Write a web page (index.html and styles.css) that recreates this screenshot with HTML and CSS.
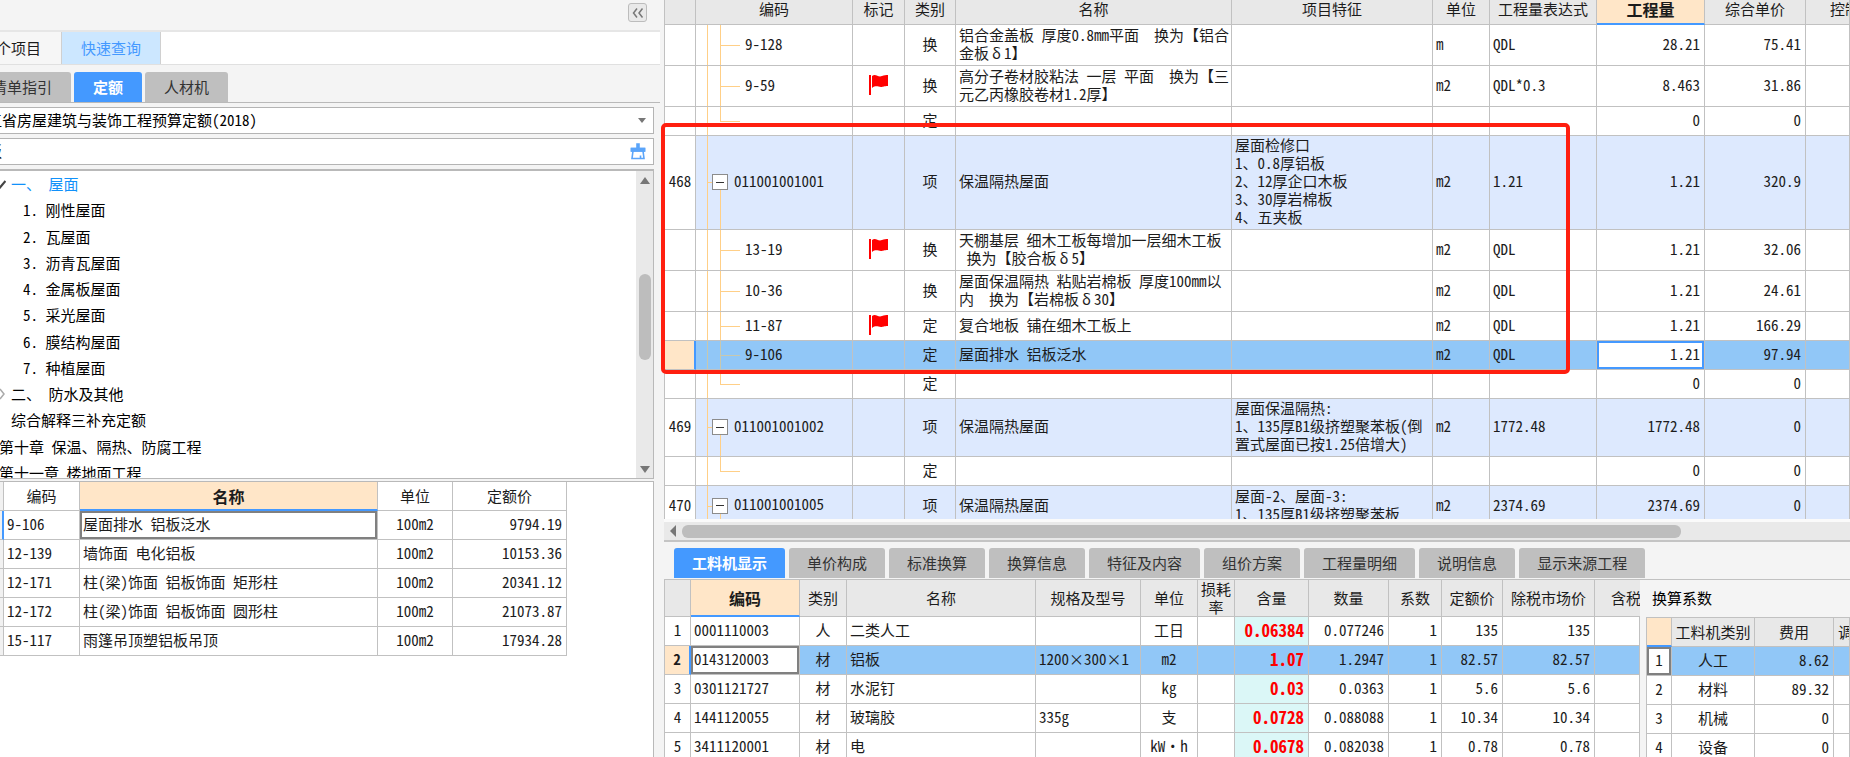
FILE: index.html
```html
<!DOCTYPE html>
<html lang="zh-CN">
<head>
<meta charset="utf-8">
<title>工程计价</title>
<link rel="stylesheet" href="styles.css">
</head>
<body>
<div class="app">
  <aside class="side">
    <header class="side-head">
      <button class="collapse" type="button" aria-label="收起">
        <svg width="12" height="12" viewBox="0 0 12 12" fill="none" stroke="#777" stroke-width="1.5"><path d="M5 1.500 1.500 6 5 10.500M10.500 1.500 7 6l3.500 4.500"/></svg>
      </button>
    </header>
    <nav class="modes">
      <button class="mode mode-first" type="button">个项目</button>
      <button class="mode mode-on" type="button">快速查询</button>
    </nav>
    <nav class="tabs side-tabs">
      <button class="tab" type="button">清单指引</button>
      <button class="tab tab-on" type="button">定额</button>
      <button class="tab" type="button">人材机</button>
    </nav>
    <div class="side-body">
      <div class="field">
        <select class="field-input" aria-label="定额库"><option>江省房屋建筑与装饰工程预算定额(2018)</option></select>
        <svg class="caret" width="8" height="5" viewBox="0 0 8 5"><path d="M0 0h8L4 5z" fill="#777"/></svg>
      </div>
      <div class="field">
        <input class="field-input" type="text" value="板" aria-label="查询">
        <button class="clear" type="button" aria-label="清除">
          <svg width="16" height="17" viewBox="0 0 16 17" fill="none" stroke="#5ba5fa" stroke-width="1.600"><path d="M8 1v4M1.500 8V5.500h13V8zM3 8l-1 7.500h12L13 8M10.500 15.500v-3"/><path d="M7 1h2v4H7zM1.500 5.500h13V8h-13z" fill="#5ba5fa"/></svg>
        </button>
      </div>
      <div class="tree-box">
        <ul class="tree">
          <li class="lv1 open"><svg class="mark" width="9" height="9" viewBox="0 0 9 9"><path d="M0 4.500 3 7.500 8.500 1" fill="none" stroke="#444" stroke-width="2.200"/></svg>一、 屋面</li>
          <li class="lv2">1. 刚性屋面</li>
          <li class="lv2">2. 瓦屋面</li>
          <li class="lv2">3. 沥青瓦屋面</li>
          <li class="lv2">4. 金属板屋面</li>
          <li class="lv2">5. 采光屋面</li>
          <li class="lv2">6. 膜结构屋面</li>
          <li class="lv2">7. 种植屋面</li>
          <li class="lv1"><svg class="mark" width="9" height="12" viewBox="0 0 9 12"><path d="M3 1 7 6 3 11" fill="none" stroke="#aaa" stroke-width="1.500"/></svg>二、 防水及其他</li>
          <li class="lv1">综合解释三补充定额</li>
          <li class="lv0">第十章 保温、隔热、防腐工程</li>
          <li class="lv0">第十一章 楼地面工程</li>
        </ul>
        <div class="vbar">
          <svg width="10" height="7" viewBox="0 0 10 7"><path d="M0 7 5 0l5 7z" fill="#777"/></svg>
          <div class="vtrack"><div class="vthumb"></div></div>
          <svg width="10" height="7" viewBox="0 0 10 7"><path d="M0 0h10L5 7z" fill="#777"/></svg>
        </div>
      </div>
      <div class="result-box">
        <table class="sheet results">
          <colgroup><col class="w-4"><col class="w-76"><col class="w-298"><col class="w-75"><col class="w-114"></colgroup>
          <thead><tr><th></th><th>编码</th><th class="active">名称</th><th>单位</th><th>定额价</th></tr></thead>
          <tbody>
            <tr><td class="row-on"></td><td>9-106</td><td class="picked">屋面排水 铝板泛水</td><td class="c">100m2</td><td class="r">9794.19</td></tr>
            <tr><td></td><td>12-139</td><td>墙饰面 电化铝板</td><td class="c">100m2</td><td class="r">10153.36</td></tr>
            <tr><td></td><td>12-171</td><td>柱(梁)饰面 铝板饰面 矩形柱</td><td class="c">100m2</td><td class="r">20341.12</td></tr>
            <tr><td></td><td>12-172</td><td>柱(梁)饰面 铝板饰面 圆形柱</td><td class="c">100m2</td><td class="r">21073.87</td></tr>
            <tr><td></td><td>15-117</td><td>雨篷吊顶塑铝板吊顶</td><td class="c">100m2</td><td class="r">17934.28</td></tr>
          </tbody>
        </table>
      </div>
    </div>
  </aside>

  <main class="main">
    <section class="bill">
      <div class="bill-view">
        <table class="sheet bill-table">
          <colgroup><col class="w-31"><col class="w-157"><col class="w-52"><col class="w-51"><col class="w-276"><col class="w-201"><col class="w-57"><col class="w-107"><col class="w-108"><col class="w-101"><col></colgroup>
          <thead><tr><th></th><th>编码</th><th>标记</th><th>类别</th><th>名称</th><th>项目特征</th><th>单位</th><th>工程量表达式</th><th class="active">工程量</th><th>综合单价</th><th class="cut">控制</th></tr></thead>
          <tbody>
            <tr class="h2"><td></td><td class="kid">9-128</td><td></td><td class="c">换</td><td>铝合金盖板 厚度0.8mm平面&nbsp;&nbsp;换为【铝合<br>金板<span class="fw">δ</span>1】</td><td></td><td>m</td><td>QDL</td><td class="r">28.21</td><td class="r">75.41</td><td></td></tr>
            <tr class="h2"><td></td><td class="kid">9-59</td><td class="c"><svg class="flag" width="20" height="22" viewBox="0 0 20 22"><path d="M1 1v20" stroke="#f00" stroke-width="2"/><path d="M3 2c4-3 6 2 10 0 2-1 4-1 6-1v11c-4 0-5 1-7 1-3 0-5-2-9 1z" fill="#f00"/></svg></td><td class="c">换</td><td>高分子卷材胶粘法 一层 平面&nbsp;&nbsp;换为【三<br>元乙丙橡胶卷材1.2厚】</td><td></td><td>m2</td><td>QDL*0.3</td><td class="r">8.463</td><td class="r">31.86</td><td></td></tr>
            <tr><td></td><td class="kid last"></td><td></td><td class="c">定</td><td></td><td></td><td></td><td></td><td class="r">0</td><td class="r">0</td><td></td></tr>
            <tr class="item h5"><td class="c no">468</td><td class="parent"><button class="fold" type="button" aria-label="折叠"></button>011001001001</td><td></td><td class="c">项</td><td>保温隔热屋面</td><td>屋面检修口<br>1、0.8厚铝板<br>2、12厚企口木板<br>3、30厚岩棉板<br>4、五夹板</td><td>m2</td><td>1.21</td><td class="r">1.21</td><td class="r">320.9</td><td></td></tr>
            <tr class="h2"><td></td><td class="kid">13-19</td><td class="c"><svg class="flag" width="20" height="22" viewBox="0 0 20 22"><path d="M1 1v20" stroke="#f00" stroke-width="2"/><path d="M3 2c4-3 6 2 10 0 2-1 4-1 6-1v11c-4 0-5 1-7 1-3 0-5-2-9 1z" fill="#f00"/></svg></td><td class="c">换</td><td>天棚基层 细木工板每增加一层细木工板<br>&nbsp;换为【胶合板<span class="fw">δ</span>5】</td><td></td><td>m2</td><td>QDL</td><td class="r">1.21</td><td class="r">32.06</td><td></td></tr>
            <tr class="h2"><td></td><td class="kid">10-36</td><td></td><td class="c">换</td><td>屋面保温隔热 粘贴岩棉板 厚度100mm以<br>内&nbsp;&nbsp;换为【岩棉板<span class="fw">δ</span>30】</td><td></td><td>m2</td><td>QDL</td><td class="r">1.21</td><td class="r">24.61</td><td></td></tr>
            <tr><td></td><td class="kid">11-87</td><td class="c"><svg class="flag" width="20" height="22" viewBox="0 0 20 22"><path d="M1 1v20" stroke="#f00" stroke-width="2"/><path d="M3 2c4-3 6 2 10 0 2-1 4-1 6-1v11c-4 0-5 1-7 1-3 0-5-2-9 1z" fill="#f00"/></svg></td><td class="c">定</td><td>复合地板 铺在细木工板上</td><td></td><td>m2</td><td>QDL</td><td class="r">1.21</td><td class="r">166.29</td><td></td></tr>
            <tr class="current"><td class="no row-on"></td><td class="kid">9-106</td><td></td><td class="c">定</td><td>屋面排水 铝板泛水</td><td></td><td>m2</td><td>QDL</td><td class="r editing">1.21</td><td class="r">97.94</td><td></td></tr>
            <tr><td></td><td class="kid last"></td><td></td><td class="c">定</td><td></td><td></td><td></td><td></td><td class="r">0</td><td class="r">0</td><td></td></tr>
            <tr class="item h3"><td class="c no">469</td><td class="parent"><button class="fold" type="button" aria-label="折叠"></button>011001001002</td><td></td><td class="c">项</td><td>保温隔热屋面</td><td>屋面保温隔热:<br>1、135厚B1级挤塑聚苯板(倒<br>置式屋面已按1.25倍增大)</td><td>m2</td><td>1772.48</td><td class="r">1772.48</td><td class="r">0</td><td></td></tr>
            <tr><td></td><td class="kid last"></td><td></td><td class="c">定</td><td></td><td></td><td></td><td></td><td class="r">0</td><td class="r">0</td><td></td></tr>
            <tr class="item h2"><td class="c no">470</td><td class="parent"><button class="fold" type="button" aria-label="折叠"></button>011001001005</td><td></td><td class="c">项</td><td>保温隔热屋面</td><td>屋面-2、屋面-3:<br>1、135厚B1级挤塑聚苯板</td><td>m2</td><td>2374.69</td><td class="r">2374.69</td><td class="r">0</td><td></td></tr>
          </tbody>
        </table>
      </div>
      <div class="callout"></div>
      <div class="hbar">
        <svg width="6" height="12" viewBox="0 0 6 12"><path d="M6 0v12L0 6z" fill="#777"/></svg>
        <div class="hthumb"></div>
      </div>
    </section>

    <section class="detail">
      <nav class="tabs detail-tabs">
        <button class="tab tab-on" type="button">工料机显示</button>
        <button class="tab" type="button">单价构成</button>
        <button class="tab" type="button">标准换算</button>
        <button class="tab" type="button">换算信息</button>
        <button class="tab" type="button">特征及内容</button>
        <button class="tab" type="button">组价方案</button>
        <button class="tab" type="button">工程量明细</button>
        <button class="tab" type="button">说明信息</button>
        <button class="tab" type="button">显示来源工程</button>
      </nav>
      <div class="detail-body">
        <div class="parts">
          <table class="sheet parts-table">
            <colgroup><col class="w-26"><col class="w-109"><col class="w-47"><col class="w-189"><col class="w-105"><col class="w-57"><col class="w-37"><col class="w-74"><col class="w-80"><col class="w-53"><col class="w-61"><col class="w-92"><col></colgroup>
            <thead><tr><th></th><th class="active">编码</th><th>类别</th><th>名称</th><th>规格及型号</th><th>单位</th><th>损耗<br>率</th><th>含量</th><th>数量</th><th>系数</th><th>定额价</th><th>除税市场价</th><th class="cut-tax">含税</th></tr></thead>
            <tbody>
              <tr><td class="c no">1</td><td>0001110003</td><td class="c">人</td><td>二类人工</td><td></td><td class="c">工日</td><td></td><td class="r qty">0.06384</td><td class="r">0.077246</td><td class="r">1</td><td class="r">135</td><td class="r">135</td><td></td></tr>
              <tr class="current"><td class="c no row-on">2</td><td class="picked">0143120003</td><td class="c">材</td><td>铝板</td><td>1200<span class="fw">×</span>300<span class="fw">×</span>1</td><td class="c">m2</td><td></td><td class="r qty">1.07</td><td class="r">1.2947</td><td class="r">1</td><td class="r">82.57</td><td class="r">82.57</td><td></td></tr>
              <tr><td class="c no">3</td><td>0301121727</td><td class="c">材</td><td>水泥钉</td><td></td><td class="c">kg</td><td></td><td class="r qty">0.03</td><td class="r">0.0363</td><td class="r">1</td><td class="r">5.6</td><td class="r">5.6</td><td></td></tr>
              <tr><td class="c no">4</td><td>1441120055</td><td class="c">材</td><td>玻璃胶</td><td>335g</td><td class="c">支</td><td></td><td class="r qty">0.0728</td><td class="r">0.088088</td><td class="r">1</td><td class="r">10.34</td><td class="r">10.34</td><td></td></tr>
              <tr><td class="c no">5</td><td>3411120001</td><td class="c">材</td><td>电</td><td></td><td class="c">kW<span class="fw">·</span>h</td><td></td><td class="r qty">0.0678</td><td class="r">0.082038</td><td class="r">1</td><td class="r">0.78</td><td class="r">0.78</td><td></td></tr>
            </tbody>
          </table>
        </div>
        <div class="factors">
          <h2 class="factors-title">换算系数</h2>
          <table class="sheet factors-table">
            <colgroup><col class="w-25"><col class="w-83"><col class="w-79"><col></colgroup>
            <thead><tr><th class="corner"></th><th>工料机类别</th><th>费用</th><th class="cut-adj">调</th></tr></thead>
            <tbody>
              <tr class="current"><td class="c no picked">1</td><td class="c">人工</td><td class="r">8.62</td><td></td></tr>
              <tr><td class="c no">2</td><td class="c">材料</td><td class="r">89.32</td><td></td></tr>
              <tr><td class="c no">3</td><td class="c">机械</td><td class="r">0</td><td></td></tr>
              <tr><td class="c no">4</td><td class="c">设备</td><td class="r">0</td><td></td></tr>
            </tbody>
          </table>
        </div>
      </div>
    </section>
  </main>
</div>
</body>
</html>
```
FILE: styles.css
```css
* { box-sizing: border-box; }

:root {
  --line: #c1c1c1;
  --blue: #4499ff;
  --peach: #ffe6c8;
  --guide: #ffcf87;
}

body {
  margin: 0;
  overflow: hidden;
  background: #f4f4f4;
  color: #1c1c1c;
  font: 15px/18px "Noto Sans CJK SC", sans-serif;
  font-feature-settings: "hwid";
}

button, input, select {
  font: inherit;
  font-feature-settings: inherit;
  color: inherit;
  border: 0;
  padding: 0;
  margin: 0;
  background: none;
}

svg { display: block; }

/* symbols that take a full character cell */
.fw { display: inline-block; width: 15px; text-align: center; }

.app { display: flex; height: 100vh; }

/* side panel */
.side {
  flex: 0 0 660px;
  display: flex;
  flex-direction: column;
  min-height: 0;
  overflow: hidden;
}

.side-head {
  flex: none;
  display: flex;
  justify-content: flex-end;
  height: 32px;
  padding: 3px 13px 0 0;
  border-bottom: 2px solid #e6e6e6;
}

.collapse {
  display: grid;
  place-items: center;
  width: 19px;
  height: 19px;
  border: 1px solid #bcbcbc;
  border-radius: 3px;
  background: #e9e9e9;
}

.modes {
  flex: none;
  display: flex;
  height: 33px;
  background: #fff;
  border-bottom: 1px solid #e0e0e0;
}

.mode { border-right: 1px solid #d0d0d0; padding: 0 19px; white-space: nowrap; }
.mode-first { padding: 0 20px 0 0; margin-left: -4px; background: #f6f6f6; }
.mode-on { background: #cce7ff; color: var(--blue); }

.tabs { flex: none; display: flex; }

.tab {
  height: 30px;
  padding: 0 18px;
  border-radius: 3px 3px 0 0;
  background: #bfbfbf;
  color: #333;
  white-space: nowrap;
}

.tab-on { background: var(--blue); color: #fff; font-weight: 700; }

.side-tabs {
  gap: 3px;
  margin-left: -27px;
  padding-top: 7px;
  border-bottom: 1px solid #b9b9b9;
}

.side-tabs .tab { padding: 0 19px; }

.side-body {
  flex: 1;
  min-height: 0;
  display: flex;
  flex-direction: column;
  padding: 4px 6px 0 0;
}

.field {
  flex: none;
  display: flex;
  align-items: center;
  height: 27px;
  margin: 0 0 4px -16px;
  padding-right: 7px;
  border: 1px solid #b4b4b4;
  background: #fff;
}

.field-input { flex: 1; min-width: 0; height: 25px; padding: 0 0 2px 2px; appearance: none; outline: 0; color: #000; }

.tree-box {
  flex: none;
  display: flex;
  height: 310px;
  border: solid #b9b9b9;
  border-width: 2px 1px 1px 0;
  background: #fff;
  overflow: hidden;
}

.tree {
  flex: 1;
  display: grid;
  grid-auto-rows: 1fr;
  align-items: center;
  height: 315px;
  margin: 0;
  padding: 0;
  list-style: none;
  color: #000;
}

.lv0 { margin-left: -1px; }
.lv1 { display: flex; align-items: center; padding-left: 11px; white-space: pre; }
.lv2 { padding-left: 23px; }
.mark { margin: 0 5px 0 -14px; }
.open { color: #1191fa; }

.vbar {
  display: flex;
  flex-direction: column;
  align-items: center;
  width: 17px;
  padding: 6px 0 5px;
  background: #e9e9e9;
}

.vtrack { flex: 1; display: flex; padding-top: 90px; }
.vthumb { width: 12px; height: 86px; border-radius: 6px; background: #bdbdbd; }

.result-box {
  flex: 1;
  min-height: 0;
  margin-top: 2px;
  border: solid #b9b9b9;
  border-width: 1px 1px 0 0;
  background: #fff;
}

/* tables */
.sheet { width: 100%; border-collapse: separate; border-spacing: 0; table-layout: fixed; background: #fff; }

.sheet th, .sheet td {
  height: 29px;
  border: solid var(--line);
  border-width: 0 1px 1px 0;
  padding: 0 4px 3px 3px;
  text-align: left;
  font-weight: 400;
  white-space: nowrap;
  overflow: hidden;
}

.sheet th { padding: 0; text-align: center; background: #e8e8e8; }
.sheet .active { background: var(--peach); border-bottom: 2px solid var(--blue); font-weight: 700; font-size: 16px; }
.sheet .c { padding: 0 0 3px; text-align: center; }
.sheet .r { text-align: right; }
.sheet .current td { background: #91c7f7; }
.sheet .picked { background: #fff; box-shadow: inset 0 0 0 2px #808080; }
.sheet .current .no, .sheet .current .picked { background: #fff; }
.sheet .current .row-on { background: var(--peach); font-weight: 700; }
.sheet .row-on { border-right: 2px solid var(--blue); }

.results { width: 567px; }
.results th { height: 29px; background: #fff; }
.results th:first-child, .results td:first-child { padding: 0; background: #f1f1f1; }

/* bill of quantities */
.main { flex: 1; min-width: 0; display: flex; flex-direction: column; padding-left: 4px; }

.bill {
  position: relative;
  flex: 1;
  min-height: 0;
  display: flex;
  flex-direction: column;
}

.bill-view { flex: 1; min-height: 0; overflow: hidden; border-left: 1px solid var(--line); }

.bill-table th, .bill-table .active { height: 25px; padding-bottom: 6px; line-height: 16px; }
.bill-table .h2 td { height: 41px; }
.bill-table .h3 td { height: 58px; }
.bill-table .h5 td { height: 94px; }
.bill-table .item td { background-color: #dde9fe; }
.bill-table .item .no { background: #fff; }
.bill-table .cut { padding-left: 24px; text-align: left; text-overflow: clip; }

.bill-table .kid {
  padding-left: 49px;
  background-image: linear-gradient(var(--guide), var(--guide)), linear-gradient(var(--guide), var(--guide)), linear-gradient(var(--guide), var(--guide));
  background-repeat: no-repeat;
  background-position: 11px 0, 24px 0, 24px 50%;
  background-size: 1px 100%, 1px 100%, 20px 1px;
}

.bill-table .last { background-size: 1px 100%, 1px 50%, 20px 1px; }
.bill-table .current .kid { background-color: #91c7f7; background-image: linear-gradient(#c8c8ae, #c8c8ae), linear-gradient(#c8c8ae, #c8c8ae), linear-gradient(#c8c8ae, #c8c8ae); background-repeat: no-repeat; background-position: 11px 0, 24px 0, 24px 50%; background-size: 1px 100%, 1px 100%, 20px 1px; }

.bill-table .parent {
  padding-left: 16px;
  background-image: linear-gradient(var(--guide), var(--guide)), linear-gradient(var(--guide), var(--guide)), linear-gradient(var(--guide), var(--guide));
  background-repeat: no-repeat;
  background-position: 11px 0, 24px 100%, 11px 50%;
  background-size: 1px 100%, 1px 50%, 5px 1px;
}

.fold {
  width: 16px;
  height: 16px;
  margin-right: 6px;
  border: 1px solid #8c8c8c;
  vertical-align: middle;
  background: linear-gradient(#333, #333) center / 8px 1px no-repeat #fff;
}

.flag { margin: 0 auto; }
.bill-table .editing { background: #fff; box-shadow: inset 0 0 0 2px var(--blue); }
.bill-table .current .editing { background: #fff; }

.callout {
  position: absolute;
  top: 123px;
  left: -3px;
  width: 909px;
  height: 251px;
  border: 4px solid #ff1f10;
  border-radius: 5px;
}

.hbar {
  flex: none;
  display: flex;
  align-items: center;
  gap: 6px;
  height: 23px;
  padding: 0 169px 0 6px;
  border-top: 3px solid #fafafa;
  border-bottom: 2px solid #c4c4c4;
  background: #e9e9e9;
}

.hthumb { flex: 1; height: 13px; border-radius: 6px; background: #bdbdbd; }

/* resource detail */
.detail { flex: none; display: flex; flex-direction: column; height: 215px; padding-top: 6px; }
.detail-tabs { gap: 4px; padding-left: 10px; }
.detail-body { flex: 1; min-height: 0; display: flex; margin-top: 1px; }
.parts { flex: 1; min-width: 0; overflow: hidden; border: solid var(--line); border-width: 1px 0 0 1px; }
.parts-table th { height: 36px; }
.parts-table .cut-tax { padding-left: 16px; text-align: left; text-overflow: clip; border-right: 0; }
.sheet .qty { background: #dbf7f7; color: #f00; font-weight: 700; font-size: 17px; }

.factors { flex: 0 0 210px; overflow: hidden; padding-left: 6px; border-top: 1px solid var(--line); }
.factors-title { margin: 0; padding: 9px 0 10px 6px; font-size: 15px; font-weight: 400; line-height: 18px; color: #000; }
.factors-table { border: solid var(--line); border-width: 1px 0 0 1px; }
.factors-table .corner { background: var(--peach); border-bottom: 2px solid var(--blue); }
.factors-table .cut-adj { padding-left: 4px; text-align: left; text-overflow: clip; }

.w-4 { width: 4px; } .w-25 { width: 25px; } .w-26 { width: 26px; } .w-31 { width: 31px; }
.w-37 { width: 37px; } .w-47 { width: 47px; } .w-51 { width: 51px; } .w-52 { width: 52px; }
.w-53 { width: 53px; } .w-57 { width: 57px; } .w-61 { width: 61px; } .w-74 { width: 74px; }
.w-75 { width: 75px; } .w-76 { width: 76px; } .w-79 { width: 79px; } .w-80 { width: 80px; }
.w-83 { width: 83px; } .w-92 { width: 92px; } .w-101 { width: 101px; } .w-105 { width: 105px; }
.w-107 { width: 107px; } .w-108 { width: 108px; } .w-109 { width: 109px; } .w-114 { width: 114px; }
.w-157 { width: 157px; } .w-189 { width: 189px; } .w-201 { width: 201px; } .w-276 { width: 276px; }
.w-298 { width: 298px; }
```
